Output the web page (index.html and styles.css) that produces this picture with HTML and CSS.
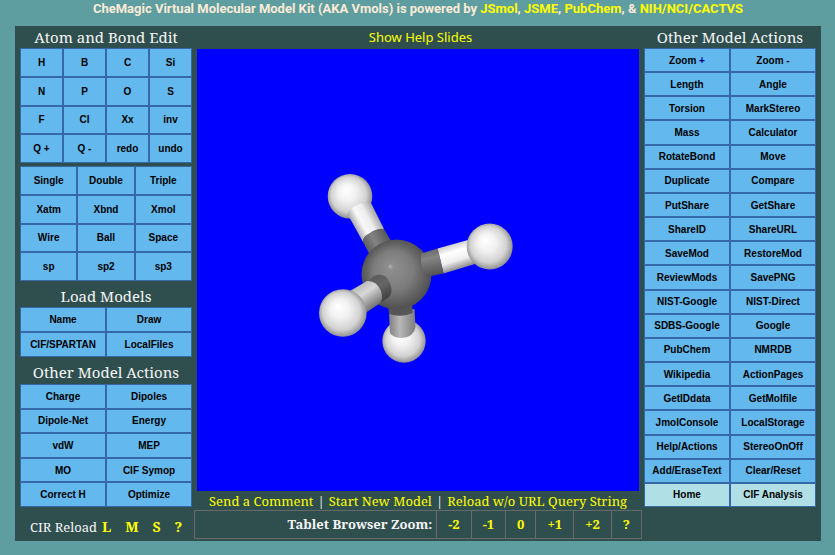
FILE: index.html
```html
<!DOCTYPE html>
<html lang="en">
<head>
<meta charset="utf-8">
<title>CheMagic Virtual Molecular Model Kit</title>
<link rel="stylesheet" href="styles.css">
</head>
<body>
<header class="credits">CheMagic Virtual Molecular Model Kit (AKA Vmols) is powered by <a href="#">JSmol</a>, <a href="#">JSME</a>, <a href="#">PubChem</a>, &amp; <a href="#">NIH/NCI/CACTVS</a></header>
<main class="kit">
  <section class="side">
    <h2>Atom and Bond Edit</h2>
    <div class="keys four tall">
      <button>H</button><button>B</button><button>C</button><button>Si</button>
      <button>N</button><button>P</button><button>O</button><button>S</button>
      <button>F</button><button>Cl</button><button>Xx</button><button>inv</button>
      <button>Q +</button><button>Q -</button><button>redo</button><button>undo</button>
    </div>
    <div class="keys three tall spaced">
      <button>Single</button><button>Double</button><button>Triple</button>
      <button>Xatm</button><button>Xbnd</button><button>Xmol</button>
      <button>Wire</button><button>Ball</button><button>Space</button>
      <button>sp</button><button>sp2</button><button>sp3</button>
    </div>
    <h2 class="later">Load Models</h2>
    <div class="keys load">
      <button>Name</button><button>Draw</button>
      <button>CIF/SPARTAN</button><button>LocalFiles</button>
    </div>
    <h2 class="later">Other Model Actions</h2>
    <div class="keys actions">
      <button>Charge</button><button>Dipoles</button>
      <button>Dipole-Net</button><button>Energy</button>
      <button>vdW</button><button>MEP</button>
      <button>MO</button><button>CIF Symop</button>
      <button>Correct H</button><button>Optimize</button>
    </div>
    <div class="reload"><span>CIR Reload</span><a href="#">L</a><a href="#">M</a><a href="#">S</a><a href="#">?</a></div>
  </section>

  <section class="stage">
    <a class="help" href="#">Show Help Slides</a>
    <svg class="viewer" viewBox="197 49 442 442" role="img" aria-label="Methane model">
      <defs>
        <radialGradient id="h" cx=".5" cy=".5" r=".56" fx=".4" fy=".36">
          <stop offset="0" stop-color="#fff"/><stop offset=".35" stop-color="#f2f2f2"/><stop offset=".7" stop-color="#d2d2d2"/><stop offset="1" stop-color="#777"/>
        </radialGradient>
        <radialGradient id="c" cx=".5" cy=".5" r=".56" fx=".41" fy=".38">
          <stop offset="0" stop-color="#b4b4b4"/><stop offset=".07" stop-color="#8e8e8e"/><stop offset=".5" stop-color="#7c7c7c"/><stop offset="1" stop-color="#454545"/>
        </radialGradient>
        <linearGradient id="w1" gradientUnits="userSpaceOnUse" x1="355" y1="228" x2="379" y2="215">
          <stop offset="0" stop-color="#aaa"/><stop offset=".3" stop-color="#f8f8f8"/><stop offset=".6" stop-color="#eee"/><stop offset="1" stop-color="#999"/>
        </linearGradient>
        <linearGradient id="g1" gradientUnits="userSpaceOnUse" x1="366" y1="246" x2="388" y2="234">
          <stop offset="0" stop-color="#606060"/><stop offset=".4" stop-color="#838383"/><stop offset="1" stop-color="#555"/>
        </linearGradient>
        <linearGradient id="w2" gradientUnits="userSpaceOnUse" x1="452" y1="244" x2="460" y2="269">
          <stop offset="0" stop-color="#ccc"/><stop offset=".3" stop-color="#fff"/><stop offset=".65" stop-color="#eee"/><stop offset="1" stop-color="#888"/>
        </linearGradient>
        <linearGradient id="g2" gradientUnits="userSpaceOnUse" x1="429" y1="250" x2="435" y2="276">
          <stop offset="0" stop-color="#696969"/><stop offset=".3" stop-color="#858585"/><stop offset="1" stop-color="#505050"/>
        </linearGradient>
        <linearGradient id="w3" gradientUnits="userSpaceOnUse" x1="360" y1="285" x2="375" y2="307">
          <stop offset="0" stop-color="#bbb"/><stop offset=".35" stop-color="#d8d8d8"/><stop offset="1" stop-color="#707070"/>
        </linearGradient>
        <linearGradient id="g3" gradientUnits="userSpaceOnUse" x1="375" y1="276" x2="388" y2="299">
          <stop offset="0" stop-color="#5c5c5c"/><stop offset=".4" stop-color="#666"/><stop offset="1" stop-color="#3e3e3e"/>
        </linearGradient>
        <linearGradient id="w4" gradientUnits="userSpaceOnUse" x1="389" y1="0" x2="416" y2="0">
          <stop offset="0" stop-color="#808080"/><stop offset=".4" stop-color="#b8b8b8"/><stop offset="1" stop-color="#7a7a7a"/>
        </linearGradient>
      </defs>
      <rect x="197" y="49" width="442" height="442" fill="#00f"/>
      <circle cx="404" cy="341" r="21.7" fill="url(#h)"/>
      <path d="M389 312 L414.500 309 L415.500 327 Q414 337 402 338 Q393 338 390 333Z" fill="url(#w4)"/>
      <path d="M388 305 L412 302 L412.500 313 Q402 318 389 314Z" fill="#565656"/>
      <circle cx="350" cy="196.300" r="22.300" fill="url(#h)"/>
      <path d="M347.500 214 Q349 208 357 205 Q365 201 371 203 L384 229 Q375 229 369 234 Q363 237 363 242Z" fill="url(#w1)"/>
      <path d="M363 242 Q362 237 370 233 Q378 228 384 229 L394 246 L371 257Z" fill="url(#g1)"/>
      <circle cx="396.500" cy="274.500" r="35" fill="url(#c)"/>
      <path d="M437.500 248.500 L468 240 L475 264 L443.500 273.500Z" fill="url(#w2)"/>
      <path d="M421 253.500 L437.500 248.500 Q441 260 443.500 273.500 L426 277 Q420 268 421 253.500Z" fill="url(#g2)"/>
      <circle cx="489.700" cy="246.400" r="23" fill="url(#h)"/>
      <path d="M366 283 L374 276 Q384 272 389 281 Q394 291 389 297 L380 303Z" fill="url(#g3)"/>
      <path d="M350 291 L367 281 Q376 280 381 291 Q384 300 379 304 L364 314Z" fill="url(#w3)"/>
      <circle cx="342.800" cy="313" r="23.800" fill="url(#h)"/>
    </svg>
    <nav class="links"><a href="#">Send a Comment</a><span>|</span><a href="#">Start New Model</a><span>|</span><a href="#">Reload w/o URL Query String</a></nav>
    <table class="zoom">
      <tr><th scope="row">Tablet Browser Zoom:</th><td><a href="#">-2</a></td><td><a href="#">-1</a></td><td><a href="#">0</a></td><td><a href="#">+1</a></td><td><a href="#">+2</a></td><td><a href="#">?</a></td></tr>
    </table>
  </section>

  <section class="side">
    <h2>Other Model Actions</h2>
    <div class="keys long">
      <button>Zoom <span class="plus">+</span></button><button>Zoom -</button>
      <button>Length</button><button>Angle</button>
      <button>Torsion</button><button>MarkStereo</button>
      <button>Mass</button><button>Calculator</button>
      <button>RotateBond</button><button>Move</button>
      <button>Duplicate</button><button>Compare</button>
      <button>PutShare</button><button>GetShare</button>
      <button>ShareID</button><button>ShareURL</button>
      <button>SaveMod</button><button>RestoreMod</button>
      <button>ReviewMods</button><button>SavePNG</button>
      <button>NIST-Google</button><button>NIST-Direct</button>
      <button>SDBS-Google</button><button>Google</button>
      <button>PubChem</button><button>NMRDB</button>
      <button>Wikipedia</button><button>ActionPages</button>
      <button>GetIDdata</button><button>GetMolfile</button>
      <button>JmolConsole</button><button>LocalStorage</button>
      <button>Help/Actions</button><button>StereoOnOff</button>
      <button>Add/EraseText</button><button>Clear/Reset</button>
      <button class="pale">Home</button><button class="pale">CIF Analysis</button>
    </div>
  </section>
</main>
</body>
</html>
```
FILE: styles.css
```css
* { box-sizing: border-box; }
body {
  margin: 0;
  padding: 0 14px 14px 15px;
  background: #5f9ea0;
  color: #f5f5f5;
  font-family: "Noto Serif", "Droid Serif", "DejaVu Serif", serif;
}
a { color: #ff0; text-decoration: none; }
.credits {
  height: 26px;
  line-height: 17px;
  text-align: center;
  white-space: nowrap;
  color: #faebd7;
  font-family: Roboto, sans-serif;
  font-size: 13px;
  font-weight: 700;
}
.kit {
  display: grid;
  grid-template-columns: 172px minmax(0, 1fr) 172px;
  gap: 2px;
  padding: 0 5px 2px;
  background: #2f4f4f;
}
h2 {
  margin: 0;
  height: 22px;
  line-height: 22px;
  text-align: center;
  font-size: 15px;
  font-weight: 400;
}
h2.later { height: 27px; line-height: 31px; }
.keys {
  display: grid;
  grid-template-columns: repeat(2, 1fr);
  grid-auto-rows: 1fr;
}
.four { grid-template-columns: repeat(4, 1fr); }
.three { grid-template-columns: repeat(3, 1fr); }
.tall { height: 115px; }
.spaced { margin-top: 3px; }
.load { height: 50px; }
.actions { height: 123px; }
.long { height: 459px; }
.spaced + .later { height: 26px; }
button {
  min-width: 0;
  min-height: 0;
  margin: 0;
  padding: 0;
  border: 1px solid #3667a6;
  background: #63b8ee;
  color: #000;
  font: 700 10px "Liberation Sans", Arial, sans-serif;
}
.pale { background: #b0e0e6; }
.plus { color: #000080; }
.reload {
  display: flex;
  align-items: baseline;
  padding: 10px 10px 0;
  line-height: 20px;
  white-space: nowrap;
  font-size: 13px;
}
.reload a { margin-right: 14px; font-size: 14px; font-weight: 700; }
.reload span { margin-right: 5px; }
.stage { display: flex; flex-direction: column; }
.help {
  height: 23px;
  padding-left: 5px;
  line-height: 23px;
  text-align: center;
  font-family: "Noto Sans", sans-serif;
  font-size: 13px;
}
.viewer { display: block; margin: 0 3px; aspect-ratio: 1; }
.links {
  display: flex;
  justify-content: center;
  gap: 4px;
  height: 19px;
  line-height: 21px;
  white-space: nowrap;
  font-size: 13px;
}
.zoom {
  width: 100%;
  border-collapse: collapse;
  font-size: 13px;
  font-weight: 700;
}
.zoom th, .zoom td {
  height: 28px;
  padding: 0 11px 1px;
  border: 1px solid #696969;
}
.zoom th { width: 100%; padding-right: 4px; text-align: right; }
```
